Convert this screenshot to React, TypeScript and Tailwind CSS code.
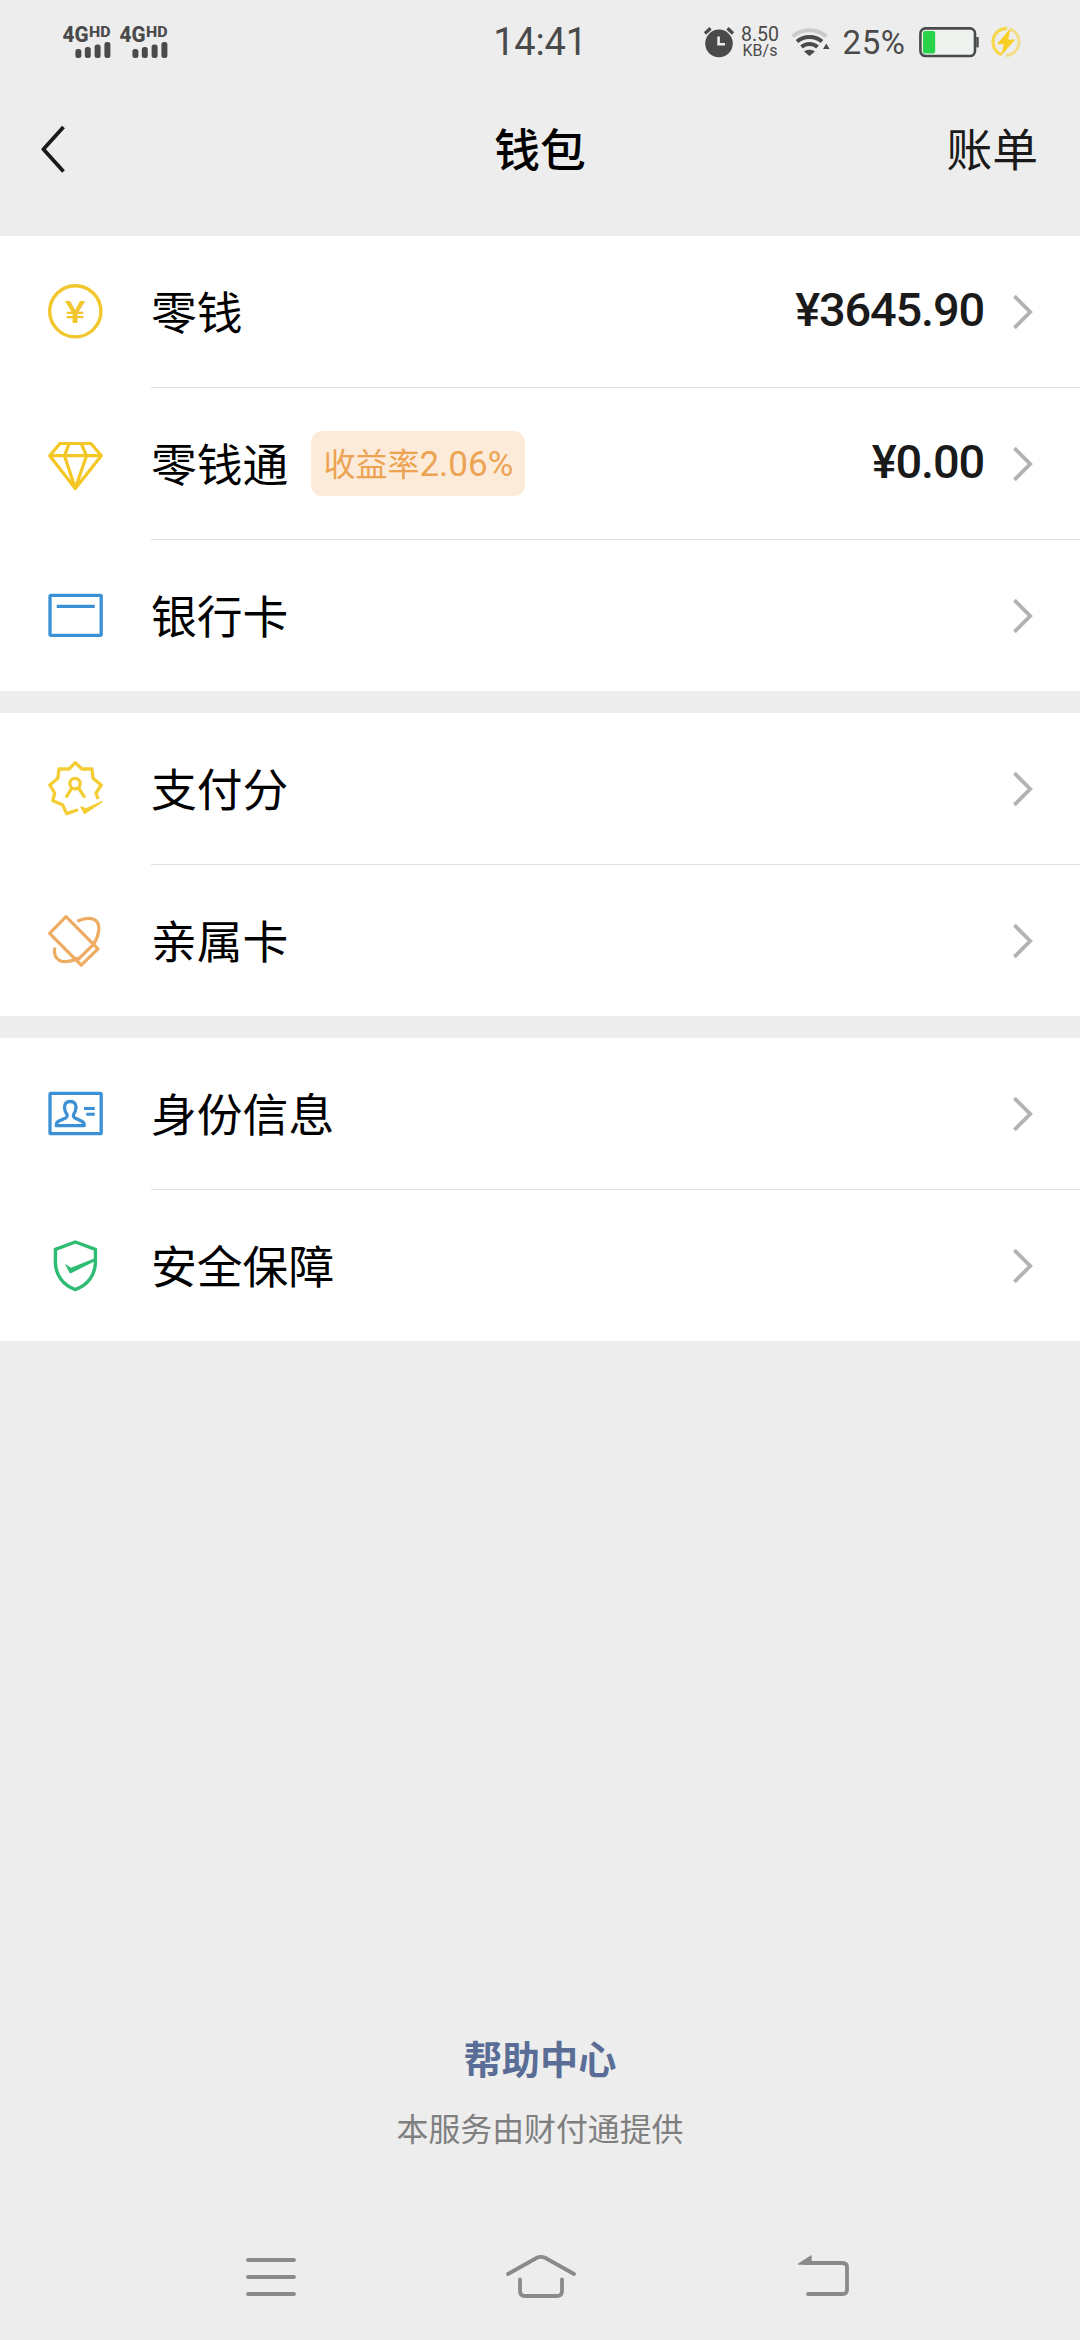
import React from 'react';

const BalanceIcon = () => (
  <svg width="60" height="61" viewBox="0 0 60 61" fill="none">
    <circle cx="30.3" cy="30.3" r="25.6" stroke="#f2c72e" strokeWidth="3.4" />
    <text x="20" y="42" textLength="20.6" lengthAdjust="spacingAndGlyphs" fontSize="32" fontWeight="500" fontFamily="Roboto, sans-serif" fill="#f2c72e">¥</text>
  </svg>
);

const DiamondIcon = () => (
  <svg width="60" height="61" viewBox="0 0 60 61" fill="none" stroke="#f4c724" strokeWidth="3.2" strokeLinejoin="round">
    <path d="M15 10.5H46L56.3 22.7L30.3 55.5L4.7 22.7Z" />
    <path d="M4.7 22.7H56.3" />
    <path d="M24.3 10.5L19.5 22.7L30.3 55.5L41.5 22.7L36.2 10.5" />
  </svg>
);

const BankCardIcon = () => (
  <svg width="60" height="61" viewBox="0 0 60 61" fill="none" stroke="#3b90d6" strokeWidth="3.3">
    <rect x="5" y="10.3" width="51.2" height="40" rx="1" />
    <path d="M11.7 21.3H49.7" />
  </svg>
);

const ScoreIcon = () => (
  <svg width="60" height="61" viewBox="0 0 60 61" fill="none" stroke="#f3cd33" strokeWidth="3.3" strokeLinejoin="round">
    <path d="M33 51.7L21.7 55.6L17.5 46.7L7.8 42.7L9.7 35L4.8 27L12.9 20.3L14 10.9L24 11L30.3 4.7L37 11L46.9 10.9L48 20.3L56.2 27L51 35L53 41" />
    <path d="M36 49L39.6 55.4L57 43.6L41 51Z" fill="#f3cd33" strokeWidth="1.4" />
    <circle cx="30" cy="25.6" r="5.2" />
    <path d="M26.8 30L21 39.7M33.6 30L39.8 39.7" />
  </svg>
);

const FamilyCardIcon = () => (
  <svg width="60" height="61" viewBox="0 0 60 61" fill="none" stroke="#eeab62" strokeWidth="3.2" strokeLinejoin="round">
    <path d="M21 6.6L4.6 23.3L36.2 55.2L53 38.8Z" />
    <path d="M31.5 51L48.5 34.3" />
    <path d="M32.3 11.2C39 7.8 47 7 51.2 10.8C55.5 15.2 54.5 25 48.5 34.3" />
    <path d="M9.8 37.5C8.8 44 10 48 14.3 50.3C19 52.8 27 51 33 48" />
  </svg>
);

const IdentityIcon = () => (
  <svg width="60" height="61" viewBox="0 0 60 61" fill="none" stroke="#3b90d6" strokeWidth="3.3" strokeLinejoin="round">
    <rect x="5" y="10.3" width="51.2" height="40.4" rx="1" />
    <path d="M25.2 18.5C21.3 18.5 19.3 21 19.5 24.5C19.7 27.8 20.6 29.8 22 31.5C22.6 34 21.8 34.6 19.5 35.6L13.5 38.3C11.5 39.3 11.2 40.6 11.3 42.6H39.2C39.3 40.6 38.8 39.3 36.8 38.3L31 35.6C28.7 34.6 28 34 28.5 31.5C29.9 29.8 30.8 27.8 31 24.5C31.2 21 29.2 18.5 25.2 18.5Z" />
    <path d="M39 25.4H49.7M41.3 31.2H49.7" strokeWidth="3" />
  </svg>
);

const ShieldIcon = () => (
  <svg width="60" height="61" viewBox="0 0 60 61" fill="none" stroke="#2dbc72" strokeWidth="3.4" strokeLinejoin="round">
    <path d="M30.3 7L10.4 14.3V27C10.4 40 18 50 30.3 54.6C42.6 50 50.4 40 50.4 27V14.3Z" />
    <path d="M20 28.8L26 32.8L50.4 23V26L26 38.2H24.6Z" fill="#2dbc72" stroke="none" />
  </svg>
);

const Chevron = () => (
  <svg width="22" height="38" viewBox="0 0 22 38" fill="none" stroke="#b2b2b2" strokeWidth="3.8">
    <path d="M2.4 3.1L18.2 19L2.4 34.9" />
  </svg>
);

interface RowItem {
  label: string;
  icon: React.ReactNode;
  tag?: { name: string; rate: string };
  amount?: string;
}

const groups: RowItem[][] = [
  [
    { label: '零钱', icon: <BalanceIcon />, amount: '¥3645.90' },
    { label: '零钱通', icon: <DiamondIcon />, tag: { name: '收益率', rate: '2.06%' }, amount: '¥0.00' },
    { label: '银行卡', icon: <BankCardIcon /> },
  ],
  [
    { label: '支付分', icon: <ScoreIcon /> },
    { label: '亲属卡', icon: <FamilyCardIcon /> },
  ],
  [
    { label: '身份信息', icon: <IdentityIcon /> },
    { label: '安全保障', icon: <ShieldIcon /> },
  ],
];

const Signal = () => (
  <svg width="57" height="40" viewBox="0 0 57 40" fill="#4a4a4a" fontFamily="Roboto, sans-serif" fontWeight="800">
    <text x="-0.5" y="20" fontSize="21.5" textLength="26" lengthAdjust="spacingAndGlyphs">4G</text>
    <text x="26" y="15" fontSize="15" textLength="21.5" lengthAdjust="spacingAndGlyphs">HD</text>
    <rect x="12.4" y="27" width="6" height="9" rx="2.5" />
    <rect x="21.8" y="25" width="6" height="11" rx="2.5" />
    <rect x="31.6" y="22.5" width="6" height="13.5" rx="2.5" />
    <rect x="41.4" y="20" width="6" height="16" rx="2.5" />
  </svg>
);

const StatusBar = () => (
  <div className="grid h-[84px] grid-cols-[1fr_auto_1fr] items-center text-[#4a4a4a]">
    <div className="flex pl-[63px]">
      <Signal />
      <Signal />
    </div>
    <div className="text-[38px] leading-[44px] font-[450] tracking-[-0.2px]">14:41</div>
    <div className="flex items-center justify-end pr-[58px]">
      <svg width="32" height="32" viewBox="0 0 32 32" fill="none">
        <circle cx="16" cy="17.4" r="13.8" fill="#4a4a4a" />
        <path d="M2 7.5L7.5 2.3M30 7.5L24.5 2.3" stroke="#4a4a4a" strokeWidth="3.4" />
        <path d="M15.6 10.5V18.2H22" stroke="#ededed" strokeWidth="2.6" />
      </svg>
      <div className="ml-[5px] flex w-[40px] flex-col items-center">
        <span className="text-[19.5px] leading-[17px]">8.50</span>
        <span className="text-[16px] leading-[16px]">KB/s</span>
      </div>
      <svg className="ml-[11px]" width="40" height="32" viewBox="0 0 40 32" fill="none" strokeWidth="4">
        <path d="M1.5 10.5C11 2 26 2 35.5 10.5" stroke="#cacaca" />
        <path d="M6 15.5C13 9.5 24 9.5 31 15.5M10.5 21C15 17 22 17 26.5 21" stroke="#4a4a4a" />
        <path d="M13 25.5C16 23.3 21 23.3 24 25.5L18.5 30Z" fill="#4a4a4a" />
        <path d="M32 23L35.3 17.6L38.6 23Z" fill="#4a4a4a" />
      </svg>
      <span className="ml-[9px] w-[68px] pt-[2px] text-center text-[33px] leading-[36px] tracking-[0.5px]">25%</span>
      <svg className="ml-[11px]" width="62" height="32" viewBox="0 0 62 32" fill="none">
        <rect x="1.4" y="2.4" width="54.6" height="27.6" rx="5" fill="#eef3ef" stroke="#4a4a4a" strokeWidth="2.6" />
        <rect x="4" y="5" width="12.2" height="22.4" rx="2" fill="#29d349" />
        <path d="M58.5 11V21.4" stroke="#4a4a4a" strokeWidth="2.4" />
      </svg>
      <svg className="ml-[9px]" width="32" height="32" viewBox="0 0 32 32" fill="none">
        <path d="M17 2.4A13.6 13.6 0 0 0 11.5 28.6" stroke="#f6d84f" strokeWidth="3.2" />
        <path d="M20.5 3.2A13.6 13.6 0 0 1 16 29.4" stroke="#f4dd8a" strokeWidth="3" />
        <path d="M20.8 1.8L6.8 18.2H13.8L11.2 29.8L25.2 13.4H18.2Z" fill="#f9cf25" />
      </svg>
    </div>
  </div>
);

const Header = () => (
  <div className="grid h-[152px] grid-cols-3 items-center px-[41px] pb-[23px] text-[45.8px] leading-[60px]">
    <svg width="26" height="50" viewBox="0 0 26 50" fill="none" stroke="#1a1a1a" strokeWidth="3.8" strokeLinejoin="round">
      <path d="M22.5 3L2.4 25.3L22.5 47.5" />
    </svg>
    <div className="pt-[7px] text-center font-medium text-black">钱包</div>
    <div className="pt-[7px] pr-[1px] text-right text-[#1a1a1a]">账单</div>
  </div>
);

const Row = ({ item, isLast }: { item: RowItem; isLast: boolean }) => (
  <div className="flex pl-[45px]">
    <div className="flex h-[151px] w-[106px] items-center">{item.icon}</div>
    <div
      className={`flex flex-1 items-center pr-[46px] ${
        isLast ? 'h-[151px]' : 'h-[152px] border-b border-[#e2e2e2]'
      }`}
    >
      <span className="pt-[6px] text-[45.8px] leading-[60px] text-black">{item.label}</span>
      {item.tag && (
        <span className="ml-[23px] flex h-[65px] w-[214px] items-center justify-center rounded-[11px] bg-[#fdebda] pt-[3px] text-[32px] text-[#eca352]">
          {item.tag.name}
          <span className="text-[35px]">{item.tag.rate}</span>
        </span>
      )}
      {item.amount && (
        <span className="ml-auto pb-[3px] text-[47px] leading-[56px] font-medium tracking-[-1.2px] text-[#1a1a1a]">
          {item.amount}
        </span>
      )}
      <div className={item.amount ? 'ml-[28px]' : 'ml-auto'}>
        <Chevron />
      </div>
    </div>
  </div>
);

const NavBar = () => (
  <div className="flex h-[126px] items-center pl-[244px] text-[#8a8a8a]">
    <svg width="54" height="50" viewBox="0 0 54 50" fill="none" stroke="currentColor" strokeWidth="3.8" strokeLinecap="round">
      <path d="M4 8H50M4 25H50M4 42H50" />
    </svg>
    <svg className="ml-[206px]" width="74" height="50" viewBox="0 0 74 50" fill="none" stroke="currentColor" strokeWidth="3.8" strokeLinecap="round">
      <path d="M4 22L32.5 6Q37 3.6 41.5 6L70 22" />
      <path d="M16 27.5V39Q16 44 21 44H53Q58 44 58 39V27.5" />
    </svg>
    <svg className="ml-[219px]" width="54" height="50" viewBox="0 0 54 50" fill="none" stroke="currentColor" strokeWidth="3.8" strokeLinecap="round">
      <path d="M8 11H45.5Q50 11 50 15.5V37.5Q50 42 45.5 42H11" />
      <path d="M1.5 12L14 4V12Z" fill="currentColor" strokeWidth="1.4" strokeLinejoin="round" />
    </svg>
  </div>
);

const App = () => {
  return (
    <div className="flex h-[2340px] w-[1080px] flex-col overflow-hidden bg-[#ededed] font-[Roboto,'Noto_Sans_CJK_SC',sans-serif]">
      <StatusBar />
      <Header />

      {/* Wallet entries */}
      <div className="flex flex-col gap-[22px]">
        {groups.map((group, idx) => (
          <div key={idx} className="bg-white">
            {group.map((item, i) => (
              <Row key={item.label} item={item} isLast={i === group.length - 1} />
            ))}
          </div>
        ))}
      </div>

      <div className="mt-auto flex flex-col items-center pb-[61px]">
        <a className="text-[38.2px] leading-[50px] font-bold text-[#5a6d96]">帮助中心</a>
        <p className="mt-[21px] text-[31.9px] leading-[46px] text-[#7f7f7f]">本服务由财付通提供</p>
      </div>
      <NavBar />
    </div>
  );
};

export default App;
